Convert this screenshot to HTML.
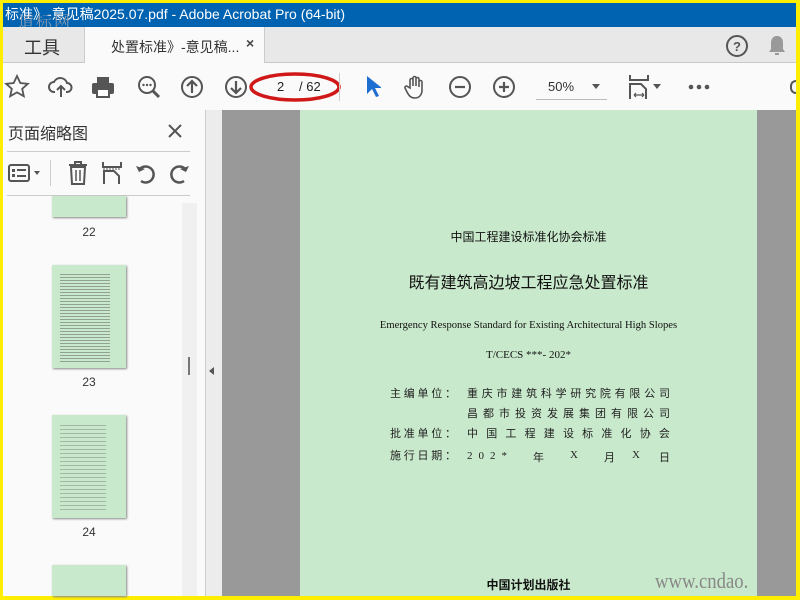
<!DOCTYPE html>
<html><head><meta charset="utf-8"><style>
*{margin:0;padding:0;box-sizing:border-box}
body{width:800px;height:600px;overflow:hidden;background:#ffee00;font-family:"Liberation Sans","Noto Sans CJK SC",sans-serif;position:relative}
.a{position:absolute}
.title{left:3px;top:3px;width:793px;height:24px;background:#0063b1;color:#fff;font-size:14px;line-height:22px;padding-left:2px}
.tabs{left:3px;top:27px;width:793px;height:36px;background:#e8e8e8;border-bottom:1px solid #c8c8c8}
.tb{left:3px;top:63px;width:793px;height:47px;background:#fafafa}
.panel{left:3px;top:110px;width:202px;height:486px;background:#fafafa}
.thumb{left:52px;width:74px;background:#c9e9cc;box-shadow:1px 1px 2px #888}
.lbl{left:52px;width:74px;text-align:center;font-size:12px;color:#333}
.ct{left:300px;width:457px;text-align:center;color:#111}
.row{position:absolute;display:flex;justify-content:space-between;font-size:11px;color:#222;height:14px;line-height:14px}
svg{position:absolute}
</style></head><body>
<div class="a title">标准》-意见稿2025.07.pdf - Adobe Acrobat Pro (64-bit)</div>
<div class="a" style="left:18px;top:9px;font-size:16px;color:#8a9ab0;letter-spacing:2px;font-family:'Noto Serif CJK SC',serif">道标网</div>
<div class="a tabs"></div>
<div class="a" style="left:24px;top:34px;font-size:18px;color:#333">工具</div>
<div class="a" style="left:84px;top:27px;width:181px;height:37px;background:#fafafa;border-left:1px solid #ccc;border-right:1px solid #ccc"></div>
<div class="a" style="left:111px;top:37px;font-size:14px;color:#333">处置标准》-意见稿...</div>
<div class="a" style="left:246px;top:35px;font-size:14px;color:#444;font-weight:bold">×</div>
<svg style="left:725px;top:34px" width="24" height="24"><circle cx="12" cy="12" r="10" fill="none" stroke="#555" stroke-width="2"/><text x="12" y="17" font-size="13" font-weight="bold" text-anchor="middle" fill="#555" font-family="Liberation Sans">?</text></svg>
<svg style="left:767px;top:34px" width="20" height="22"><path d="M10 2c-4 0-6 3-6 7v6l-2 3h16l-2-3V9c0-4-2-7-6-7z" fill="#999"/><rect x="8" y="19" width="4" height="2" fill="#999"/></svg>
<div class="a tb"></div>
<svg style="left:4px;top:74px" width="26" height="26"><path d="M13 2l3.3 7 7.5.8-5.6 5 1.6 7.4L13 18.4 6.2 22.2l1.6-7.4-5.6-5 7.5-.8z" fill="none" stroke="#555" stroke-width="1.8"/></svg>
<svg style="left:48px;top:75px" width="26" height="24"><path d="M7 17H6a5 5 0 0 1 0-10 7 7 0 0 1 13 1 4.5 4.5 0 0 1 0 9h-1M13 22V11M9 15l4-4 4 4" fill="none" stroke="#555" stroke-width="2"/></svg>
<svg style="left:91px;top:75px" width="24" height="24"><rect x="6" y="2" width="12" height="6" fill="#555"/><rect x="1" y="8" width="22" height="11" rx="2" fill="#555"/><rect x="6" y="14" width="12" height="8" fill="#fff" stroke="#555" stroke-width="2"/></svg>
<svg style="left:136px;top:74px" width="26" height="26"><circle cx="11" cy="11" r="8" fill="none" stroke="#555" stroke-width="2"/><path d="M17 17l6 6" stroke="#555" stroke-width="3"/><circle cx="7.5" cy="11" r="1.2" fill="#555"/><circle cx="11" cy="11" r="1.2" fill="#555"/><circle cx="14.5" cy="11" r="1.2" fill="#555"/></svg>
<svg style="left:180px;top:75px" width="24" height="24"><circle cx="12" cy="12" r="10" fill="none" stroke="#555" stroke-width="2"/><path d="M12 18V7M7 11l5-5 5 5" fill="none" stroke="#555" stroke-width="2.2"/></svg>
<svg style="left:224px;top:75px" width="24" height="24"><circle cx="12" cy="12" r="10" fill="none" stroke="#555" stroke-width="2"/><path d="M12 6v11M7 13l5 5 5-5" fill="none" stroke="#555" stroke-width="2.2"/></svg>
<svg style="left:248px;top:70px" width="96" height="34"><ellipse cx="47" cy="17" rx="44" ry="13" fill="none" stroke="#d01818" stroke-width="3.5"/></svg>
<div class="a" style="left:277px;top:79px;font-size:13px;color:#222">2</div>
<div class="a" style="left:299px;top:79px;font-size:13px;color:#222">/ 62</div>
<div class="a" style="left:339px;top:73px;width:1px;height:28px;background:#ccc"></div>
<svg style="left:365px;top:75px" width="16" height="24"><path d="M2 1v18l5-5 4 8 3-1-4-8h7z" fill="#1f6fd0"/></svg>
<svg style="left:404px;top:74px" width="24" height="26"><path d="M6 14V6a1.5 1.5 0 0 1 3 0v6V4a1.5 1.5 0 0 1 3 0v8V5a1.5 1.5 0 0 1 3 0v8V8a1.5 1.5 0 0 1 3 0v8c0 5-3 8-7 8s-6-2-8-6l-2-4a1.5 1.5 0 0 1 2.5-1.5z" fill="none" stroke="#555" stroke-width="1.6"/></svg>
<svg style="left:448px;top:75px" width="24" height="24"><circle cx="12" cy="12" r="10" fill="none" stroke="#555" stroke-width="2"/><path d="M7 12h10" stroke="#555" stroke-width="2.2"/></svg>
<svg style="left:492px;top:75px" width="24" height="24"><circle cx="12" cy="12" r="10" fill="none" stroke="#555" stroke-width="2"/><path d="M7 12h10M12 7v10" stroke="#555" stroke-width="2.2"/></svg>
<div class="a" style="left:548px;top:79px;font-size:13px;color:#333">50%</div>
<div class="a" style="left:592px;top:84px;border:4px solid transparent;border-top:5px solid #555"></div>
<div class="a" style="left:536px;top:99px;width:71px;height:1px;background:#bbb"></div>
<svg style="left:628px;top:74px" width="22" height="26"><path d="M2 1v5h18V1M2 25V10h11l5 5v10" fill="none" stroke="#555" stroke-width="2"/><path d="M6 21h10M6 21l2-2M6 21l2 2M16 21l-2-2M16 21l-2 2" stroke="#555" stroke-width="1.2"/></svg>
<div class="a" style="left:653px;top:84px;border:4px solid transparent;border-top:5px solid #555"></div>
<svg style="left:688px;top:83px" width="22" height="8"><circle cx="3" cy="4" r="2.3" fill="#555"/><circle cx="11" cy="4" r="2.3" fill="#555"/><circle cx="19" cy="4" r="2.3" fill="#555"/></svg>
<div class="a" style="left:790px;top:80px;width:6px;height:14px;border:2px solid #555;border-right:none;border-radius:6px 0 0 6px"></div>
<div class="a" style="left:3px;top:110px;width:793px;height:1px;background:#ddd"></div>
<div class="a panel"></div>
<div class="a" style="left:8px;top:120px;font-size:16px;color:#333">页面缩略图</div>
<svg style="left:168px;top:124px" width="14" height="14"><path d="M1 1l12 12M13 1L1 13" stroke="#555" stroke-width="2"/></svg>
<div class="a" style="left:7px;top:151px;width:183px;height:1px;background:#ccc"></div>
<svg style="left:8px;top:164px" width="22" height="18"><rect x="1" y="1" width="20" height="16" rx="2" fill="none" stroke="#555" stroke-width="2"/><rect x="4" y="5" width="3" height="3" fill="#555"/><rect x="4" y="10" width="3" height="3" fill="#555"/><rect x="9" y="5" width="9" height="2" fill="#555"/><rect x="9" y="11" width="9" height="2" fill="#555"/></svg>
<div class="a" style="left:34px;top:171px;border:3.5px solid transparent;border-top:4px solid #555"></div>
<div class="a" style="left:50px;top:160px;width:1px;height:26px;background:#ccc"></div>
<svg style="left:68px;top:161px" width="20" height="24"><path d="M1 4h18M7 4V1h6v3M3 6l1 17h12l1-17z" fill="none" stroke="#555" stroke-width="2"/><path d="M8 9v11M12 9v11" stroke="#555" stroke-width="1.5"/></svg>
<svg style="left:102px;top:161px" width="20" height="24"><path d="M1 1v5h18V1M2 23V10h10l5 5v8" fill="none" stroke="#555" stroke-width="2"/><path d="M1 8h18" stroke="#555" stroke-width="1" stroke-dasharray="2 1"/></svg>
<svg style="left:135px;top:162px" width="22" height="22"><path d="M6 19A8 8 0 1 0 4 8" fill="none" stroke="#555" stroke-width="2.5"/><path d="M1 4l3 6 6-3z" fill="#555"/></svg>
<svg style="left:168px;top:162px" width="22" height="22"><path d="M16 19A8 8 0 1 1 18 8" fill="none" stroke="#555" stroke-width="2.5"/><path d="M21 4l-3 6-6-3z" fill="#555"/></svg>
<div class="a" style="left:7px;top:195px;width:183px;height:1px;background:#ccc"></div>
<div class="a" style="left:182px;top:203px;width:15px;height:393px;background:#f0f0f0"></div>
<div class="a" style="left:188px;top:357px;width:2px;height:18px;background:#777"></div>
<div class="a thumb" style="top:196px;height:21px"></div>
<div class="a lbl" style="top:225px">22</div>
<div class="a thumb" style="top:265px;height:103px"></div>
<div class="a lbl" style="top:375px">23</div>
<div class="a thumb" style="top:415px;height:103px"></div>
<div class="a lbl" style="top:525px">24</div>
<div class="a thumb" style="top:565px;height:31px"></div>
<div class="a" style="left:60px;top:272px;width:50px;height:90px;background:repeating-linear-gradient(#c9e9cc 0 2px,#666 2px 3px);opacity:.55"></div>
<div class="a" style="left:60px;top:422px;width:46px;height:90px;background:repeating-linear-gradient(#c9e9cc 0 3px,#777 3px 4px);opacity:.45"></div>
<div class="a" style="left:205px;top:110px;width:1px;height:486px;background:#ccc"></div>
<div class="a" style="left:206px;top:110px;width:16px;height:486px;background:#ececec"></div>
<div class="a" style="left:209px;top:367px;border:4px solid transparent;border-right:5px solid #555;border-left:none"></div>
<div class="a" style="left:222px;top:110px;width:78px;height:486px;background:#999"></div>
<div class="a" style="left:300px;top:110px;width:457px;height:486px;background:#c9e9cc"></div>
<div class="a" style="left:757px;top:110px;width:39px;height:486px;background:#999"></div>
<div class="a ct" style="top:228px;font-size:12px">中国工程建设标准化协会标准</div>
<div class="a ct" style="top:269px;font-size:16px">既有建筑高边坡工程应急处置标准</div>
<div class="a ct" style="top:320px;font-size:10.6px;font-family:'Liberation Serif',serif">Emergency Response Standard for Existing Architectural High Slopes</div>
<div class="a ct" style="top:349px;font-size:11px;font-family:'Liberation Serif',serif">T/CECS ***- 202*</div>
<div class="row" style="left:390px;top:387px;width:66px"><span>主</span><span>编</span><span>单</span><span>位</span><span>：</span></div>
<div class="row" style="left:390px;top:427px;width:66px"><span>批</span><span>准</span><span>单</span><span>位</span><span>：</span></div>
<div class="row" style="left:390px;top:449px;width:66px"><span>施</span><span>行</span><span>日</span><span>期</span><span>：</span></div>
<div class="row" style="left:467px;top:387px;width:203px"><span>重</span><span>庆</span><span>市</span><span>建</span><span>筑</span><span>科</span><span>学</span><span>研</span><span>究</span><span>院</span><span>有</span><span>限</span><span>公</span><span>司</span></div>
<div class="row" style="left:467px;top:407px;width:203px"><span>昌</span><span>都</span><span>市</span><span>投</span><span>资</span><span>发</span><span>展</span><span>集</span><span>团</span><span>有</span><span>限</span><span>公</span><span>司</span></div>
<div class="row" style="left:467px;top:427px;width:203px"><span>中</span><span>国</span><span>工</span><span>程</span><span>建</span><span>设</span><span>标</span><span>准</span><span>化</span><span>协</span><span>会</span></div>
<div class="row" style="left:467px;top:449px;width:40px;font-family:'Liberation Serif',serif"><span>2</span><span>0</span><span>2</span><span>*</span></div>
<div class="a" style="left:533px;top:449px;font-size:11px;color:#222">年</div>
<div class="a" style="left:570px;top:449px;font-size:11px;color:#222;font-family:'Liberation Serif',serif">X</div>
<div class="a" style="left:604px;top:449px;font-size:11px;color:#222">月</div>
<div class="a" style="left:632px;top:449px;font-size:11px;color:#222;font-family:'Liberation Serif',serif">X</div>
<div class="a" style="left:659px;top:449px;font-size:11px;color:#222">日</div>
<div class="a ct" style="top:576px;font-size:12px;font-weight:bold">中国计划出版社</div>
<div class="a" style="left:655px;top:568px;font-size:22px;color:#888;font-family:'Liberation Serif',serif;transform:scaleX(.85);transform-origin:left">www.cndao.</div>
</body></html>
